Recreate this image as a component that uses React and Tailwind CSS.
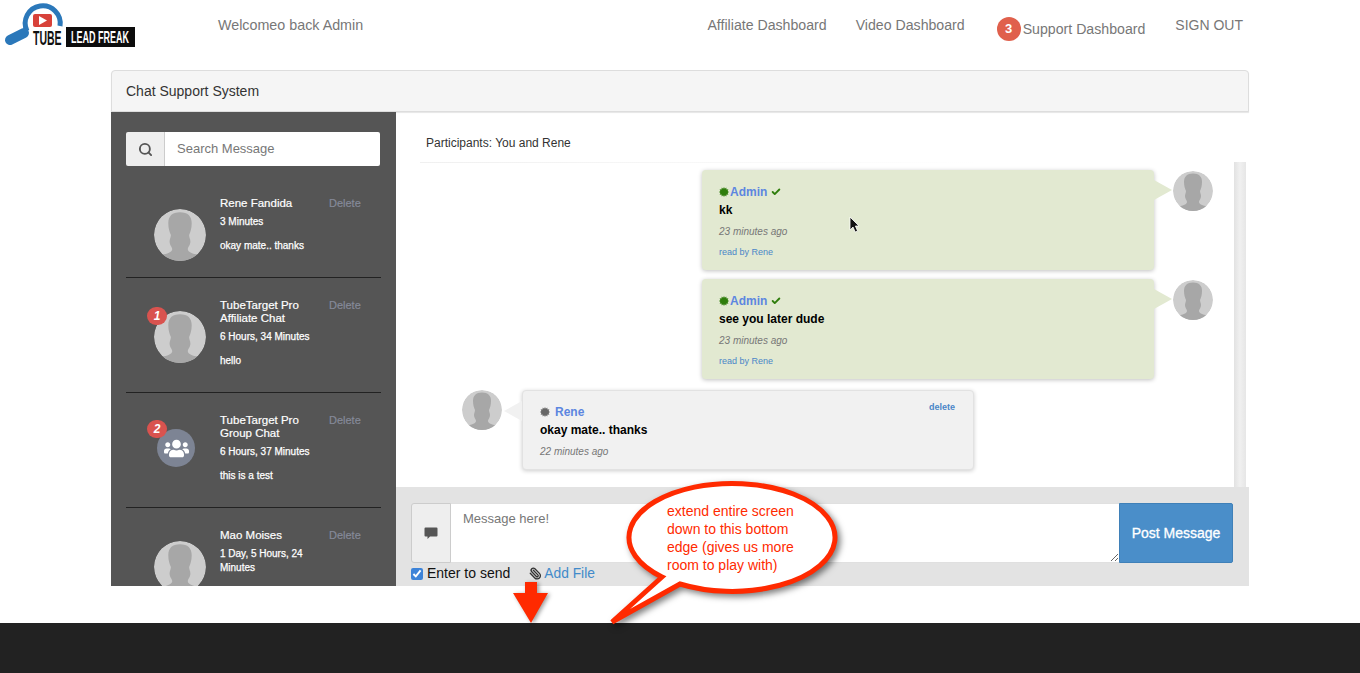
import React from 'react';
import { Search, Check, Paperclip } from 'lucide-react';
import { FaUsers } from 'react-icons/fa';

// grey placeholder person
const Avatar = ({ size = 40 }) => (
  <svg width={size} height={size} viewBox="0 0 40 40" className="block shrink-0 rounded-full">
    <circle cx="20" cy="20" r="20" fill="#cdcdcd" />
    <path
      d="M20 2.500C14 2.500 11 5.500 11 11C11 15 12 18 13 20C13 22 12 23 12 25C12 28 14 29 14 31C14 33 10 35 6 35L6 40L34 40L34 35C30 35 26 33 26 31C26 29 28 28 28 25C28 23 27 22 27 20C28 18 29 15 29 11C29 5.500 26 2.500 20 2.500Z"
      fill="#a7a7a7"
    />
  </svg>
);

const Burst = ({ color }) => (
  <svg width="10" height="10" viewBox="0 0 20 20" className="shrink-0">
    <polygon
      fill={color}
      points="10,0 11.800,3.300 14.500,1.200 15.100,4.900 18.700,4.500 17.300,7.900 20,10 17.300,12.100 18.700,15.500 15.100,15.100 14.500,18.800 11.800,16.700 10,20 8.200,16.700 5.500,18.800 4.900,15.100 1.300,15.500 2.700,12.100 0,10 2.700,7.900 1.300,4.500 4.900,4.900 5.500,1.200 8.200,3.300"
    />
  </svg>
);

const Logo = () => (
  <svg width="135" height="50" viewBox="0 0 135 50" className="block shrink-0">
    <path d="M27 31A17.500 17.500 0 1 1 60 26" fill="none" stroke="#2b78ba" strokeWidth="5" />
    <path d="M10 40L24 33" stroke="#2b78ba" strokeWidth="10" strokeLinecap="round" />
    <rect x="33" y="14" width="19" height="13" rx="2" fill="#d8423a" />
    <polygon points="39,16 47,20.500 39,25" fill="#fff" />
    <text transform="translate(33 45) scale(1 2)" fontSize="10.500" fontWeight="700" fontFamily="'Liberation Sans', sans-serif" fill="#111">TUBE</text>
    <rect x="66" y="27" width="69" height="20" fill="#0c0c0c" />
    <text transform="translate(71 43) scale(1 1.900)" fontSize="9" fontWeight="700" fontFamily="'Liberation Sans', sans-serif" fill="#fff">LEAD FREAK</text>
  </svg>
);

const contacts = [
  { name: ['Rene Fandida'], time: ['3 Minutes'], msg: 'okay mate.. thanks' },
  { name: ['TubeTarget Pro', 'Affiliate Chat'], time: ['6 Hours, 34 Minutes'], msg: 'hello', badge: '1' },
  { name: ['TubeTarget Pro', 'Group Chat'], time: ['6 Hours, 37 Minutes'], msg: 'this is a test', badge: '2', group: true },
  { name: ['Mao Moises'], time: ['1 Day, 5 Hours, 24', 'Minutes'], msg: '' },
];

const ContactRow = ({ c }) => (
  <div className="flex border-b border-[#222] pt-[21px] pb-[24px] pl-[28px]">
    {/* avatar hangs below the text block, it does not push the row */}
    <div className="relative mt-[12px] w-[52px] h-0 shrink-0">
      {c.group ? (
        <div className="mt-[3px] ml-[3px] w-[38px] h-[38px] rounded-full bg-[#7d8494] flex items-center justify-center">
          <FaUsers className="text-white text-[25px]" />
        </div>
      ) : (
        <Avatar size={52} />
      )}
      {c.badge && (
        <span className={`absolute -left-[7px] ${c.group ? '-top-[6px]' : '-top-[4px]'} w-[20px] h-[18px] rounded-full bg-[#d9534f] text-white text-[12px] leading-[18px] font-bold italic text-center`}>
          {c.badge}
        </span>
      )}
    </div>
    <div className="ml-[14px] w-[103px] shrink-0 text-white">
      <div className="text-[11.500px] leading-[13px] [-webkit-text-stroke:0.2px_white]">
        {c.name.map((n) => <div key={n}>{n}</div>)}
      </div>
      <div className="mt-[5px] text-[10px] leading-[14px] [-webkit-text-stroke:0.25px_white]">
        {c.time.map((n) => <div key={n}>{n}</div>)}
      </div>
      <div className="mt-[10px] text-[10px] leading-[14px] h-[14px] [-webkit-text-stroke:0.25px_white]">{c.msg}</div>
    </div>
    <span className="ml-[6px] text-[11px] leading-[13px] text-[#858a99] [-webkit-text-stroke:0.2px_#858a99]">Delete</span>
  </div>
);

const AdminBubble = ({ text }) => (
  <div className="flex justify-end items-start gap-[19px] pr-[21px]">
    <div className="relative w-[452px] h-[100px] rounded-[4px] bg-[#e2e9d1] shadow-[0_1px_4px_rgba(0,0,0,0.25)] pt-[14px] pl-[17px]">
      <div className="flex items-center h-[16px]">
        <Burst color="#2f7d0c" />
        <span className="ml-[1px] text-[12px] font-bold text-[#5c86e0]">Admin</span>
        <Check size={10} strokeWidth={4.5} className="ml-[4px] text-[#2f7d0c]" />
      </div>
      <div className="mt-[2px] text-[12px] leading-[16px] font-bold text-black">{text}</div>
      <div className="mt-[6px] text-[10px] leading-[16px] italic text-[#777]">23 minutes ago</div>
      <div className="mt-[4px] text-[9px] leading-[16px] text-[#4a86c8]">read by Rene</div>
      <span className="absolute top-[10px] -right-[18px] w-0 h-0 border-y-[10px] border-y-transparent border-l-[18px] border-l-[#e2e9d1]" />
    </div>
    <div className="mt-[1px]"><Avatar /></div>
  </div>
);

const UserBubble = () => (
  <div className="flex items-start gap-[20px] pl-[66px]">
    <Avatar />
    <div className="relative w-[452px] h-[80px] rounded-[4px] bg-[#f1f1f1] border border-[#e2e2e2] shadow-[0_1px_4px_rgba(0,0,0,0.2)] pt-[13px] pl-[17px]">
      <div className="flex items-center h-[16px]">
        <Burst color="#666" />
        <span className="ml-[5px] text-[12px] font-bold text-[#5c86e0]">Rene</span>
        <span className="ml-auto mr-[18px] -mt-[9px] text-[9px] font-bold text-[#4a86c8]">delete</span>
      </div>
      <div className="mt-[2px] text-[12px] leading-[16px] font-bold text-black">okay mate.. thanks</div>
      <div className="mt-[6px] text-[10px] leading-[16px] italic text-[#777]">22 minutes ago</div>
      <span className="absolute top-[10px] -left-[19px] w-0 h-0 border-y-[10px] border-y-transparent border-r-[18px] border-r-[#f1f1f1]" />
    </div>
  </div>
);

export default function App() {
  return (
    <div className="relative h-[673px] overflow-hidden bg-white flex flex-col font-['Liberation_Sans',sans-serif]">
      {/* top nav */}
      <header className="h-[70px] shrink-0 flex items-start text-[14.150px] text-[#777]">
        <Logo />
        <span className="ml-[83px] mt-[16px] text-[14.300px] leading-[18px]">Welcomeo back Admin</span>
        <nav className="ml-auto mr-[117px] flex items-start">
          <span className="mt-[16px] leading-[18px]">Affiliate Dashboard</span>
          <span className="ml-[29px] mt-[16px] leading-[18px]">Video Dashboard</span>
          <span className="ml-[32px] mt-[17px] flex items-center">
            <span className="w-[24px] h-[24px] rounded-full bg-[#e0604c] text-white text-[13px] font-bold flex items-center justify-center">3</span>
            <span className="ml-[2px] mt-[1px]">Support Dashboard</span>
          </span>
          <span className="ml-[30px] mt-[16px] text-[14px] leading-[18px]">SIGN OUT</span>
        </nav>
      </header>

      {/* chat panel */}
      <section className="ml-[111px] w-[1138px] h-[516px] shrink-0 flex flex-col">
        <div className="h-[42px] shrink-0 rounded-t-[4px] border border-[#ddd] bg-[#f5f5f5] shadow-[0_1px_1px_rgba(0,0,0,0.1)] pl-[14px] flex items-center text-[14px] text-[#333]">
          Chat Support System
        </div>
        <div className="flex flex-1 min-h-0">
          {/* contact list */}
          <aside className="w-[285px] shrink-0 bg-[#555] px-[15px] pt-[20px] overflow-hidden">
            <div className="flex h-[34px] w-[254px] mb-[10px] rounded-[2px] overflow-hidden">
              <div className="w-[39px] bg-[#eee] border-r border-[#ccc] flex items-center justify-center">
                <Search size={15} strokeWidth={3} className="text-[#555]" />
              </div>
              <div className="flex-1 bg-white pl-[12px] flex items-center text-[13px] text-[#777]">Search Message</div>
            </div>
            {contacts.map((c) => <ContactRow key={c.name.join()} c={c} />)}
          </aside>

          {/* conversation */}
          <div className="flex-1 min-w-0 flex flex-col">
            <div className="h-[50px] shrink-0 pl-[30px] pt-[22px] text-[12px] leading-[18px] text-[#333]">
              Participants: You and Rene
              <div className="mt-[10px] -ml-[6px] h-[1px] w-[560px] bg-gradient-to-r from-[#f0f0f0] to-transparent" />
            </div>
            <div className="flex h-[325px] shrink-0">
              <div className="flex-1 min-w-0 pt-[8px] flex flex-col">
                <AdminBubble text="kk" />
                <div className="h-[9px]" />
                <AdminBubble text="see you later dude" />
                <div className="h-[11px]" />
                <UserBubble />
              </div>
              <div className="w-[12px] mr-[3px] shrink-0 bg-gradient-to-r from-[#e2e2e2] via-[#f0f0f0] to-[#e6e6e6]" />
            </div>
            <div className="h-[99px] shrink-0 bg-[#e3e3e3] pt-[16px] pl-[15px] pr-[16px]">
              <div className="flex h-[60px]">
                <div className="w-[40px] shrink-0 rounded-l-[3px] border border-[#ccc] bg-[#eee] flex items-center justify-center">
                  <svg width="14" height="14" viewBox="0 0 14 14"><path d="M1.500 1.500h11a1 1 0 0 1 1 1v7a1 1 0 0 1-1 1H6L3.500 13v-2.500h-2a1 1 0 0 1-1-1v-7a1 1 0 0 1 1-1z" fill="#555" /></svg>
                </div>
                <textarea
                  readOnly
                  placeholder="Message here!"
                  className="flex-1 min-w-0 h-[60px] bg-white border-y border-[#e0e0e0] pl-[12px] pt-[5px] text-[13px] text-[#555] placeholder:text-[#777] outline-none"
                />
                <button className="w-[114px] shrink-0 pt-[1px] bg-[#4a8ec9] border border-[#3f80b8] rounded-r-[2px] text-white text-[14px] [-webkit-text-stroke:0.3px_white]">
                  Post Message
                </button>
              </div>
              <div className="flex items-center h-[21px] text-[14px]">
                <input type="checkbox" readOnly checked className="w-[12px] h-[12px] m-0 accent-[#3d83d8]" />
                <span className="ml-[4px] text-[#111]">Enter to send</span>
                <Paperclip size={13} strokeWidth={2.5} className="ml-[19px] text-[#333] -scale-x-100" />
                <span className="ml-[2px] mt-[2px] text-[13.800px] text-[#428bca]">Add File</span>
              </div>
            </div>
          </div>
        </div>
      </section>

      <footer className="mt-[37px] h-[50px] shrink-0 bg-[#222]" />

      {/* mouse pointer in the screenshot */}
      <svg width="12" height="18" viewBox="0 0 12 18" className="absolute left-[849px] top-[216px]">
        <path d="M1 1v13l3-3 2.200 5 2.400-1-2.200-5H10z" fill="#111" stroke="#fff" strokeWidth="0.8" />
      </svg>

      {/* review annotation */}
      <svg width="250" height="160" viewBox="600 470 250 160" className="absolute left-[600px] top-[470px] drop-shadow-[3px_3px_3px_rgba(0,0,0,0.5)]">
        <path d="M662 577A103 54 0 1 1 680 584L612 622Z" fill="#fff" stroke="#ff2a00" strokeWidth="5" strokeLinejoin="miter" />
      </svg>
      <div className="absolute left-[667px] top-[502px] text-[14px] leading-[18px] text-[#ff2a00] whitespace-nowrap">
        <div>extend entire screen</div>
        <div>down to this bottom</div>
        <div>edge (gives us more</div>
        <div>room to play with)</div>
      </div>
      <svg width="44" height="46" viewBox="0 0 44 46" className="absolute left-[510px] top-[580px] drop-shadow-[2px_1px_2px_rgba(0,0,0,0.4)]">
        <path d="M15 2h12v11h11L21 43 3 13h12z" fill="#ff2a00" />
      </svg>
    </div>
  );
}
